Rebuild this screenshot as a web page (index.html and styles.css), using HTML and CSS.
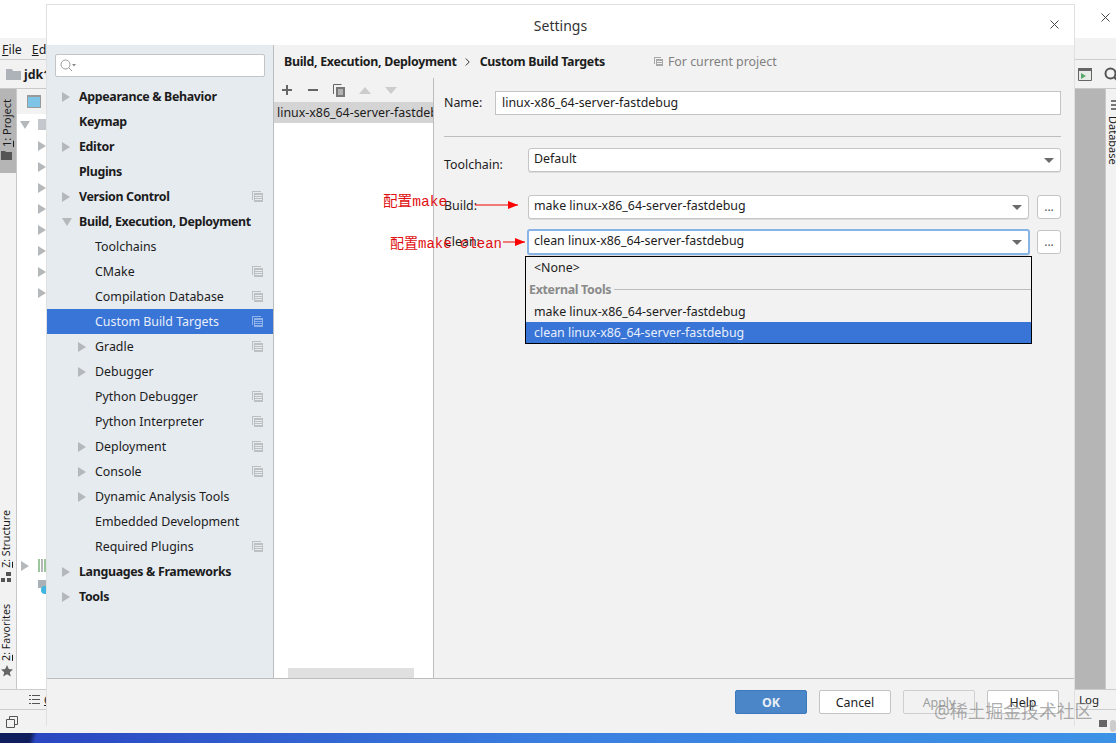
FILE: index.html
```html
<!DOCTYPE html>
<html lang="en">
<head>
    <meta charset="UTF-8">
    <title>Settings</title>
    <link rel="stylesheet" href="styles.css">
</head>
<body>
    <div class="desktop">
        <!-- IDE behind the dialog -->
        <div class="ide">
            <div class="ide-title">
                <svg class="ide-close" width="9" height="9" viewBox="0 0 9 9"><path d="M.5.5l8 8M8.500.5l-8 8" stroke="#444"/></svg>
            </div>
            <div class="ide-menu"><span><u>F</u>ile</span><span><u>E</u>d</span></div>
            <div class="ide-nav">
                <div class="crumb">
                    <svg width="15" height="11" viewBox="0 0 15 11"><path d="M0 0h6l1 2h8v9H0z" fill="#adb3b8"/></svg>
                    <b>jdk1</b>
                </div>
                <div class="nav-tools">
                    <svg width="14" height="13" viewBox="0 0 14 13"><rect width="14" height="13" fill="#e8ece8" /><rect width="14" height="3" fill="#666"/><path d="M3 5l5 3-5 3z" fill="#59a869"/><path d="M.5.5h13v12H.5z" fill="none" stroke="#666"/></svg>
                    <svg width="15" height="15" viewBox="0 0 15 15"><circle cx="6.500" cy="6.500" r="5" fill="none" stroke="#555" stroke-width="2"/><path d="M10 10l5 5" stroke="#555" stroke-width="2"/></svg>
                </div>
            </div>
            <div class="ide-main">
                <div class="side-strip">
                    <div class="strip-tab on">
                        <span class="vtext"><u>1</u>: Project</span>
                        <svg width="11" height="9" viewBox="0 0 11 9"><path d="M0 0h4l1 1h6v8H0z" fill="#555"/></svg>
                    </div>
                    <div class="strip-low">
                        <div class="strip-tab">
                            <span class="vtext"><u>Z</u>: Structure</span>
                            <svg width="10" height="10" viewBox="0 0 10 10"><path d="M5 0h5v4H5zM0 6h4v4H0zM6 6h4v4H6z" fill="#555"/></svg>
                        </div>
                        <div class="strip-tab">
                            <span class="vtext"><u>2</u>: Favorites</span>
                            <svg width="12" height="12" viewBox="0 0 12 12"><path d="M6 0l1.800 4 4.200.4-3.200 2.800 1 4.300L6 9.200l-3.800 2.300 1-4.300L0 4.400l4.200-.4z" fill="#666"/></svg>
                        </div>
                    </div>
                </div>
                <div class="tree">
                    <div class="tree-tools"><svg width="14" height="13" viewBox="0 0 14 13"><rect width="14" height="13" fill="#7ec4e6" /><path d="M.5.5h13v12H.5z" fill="none" stroke="#999"/><rect width="14" height="2" fill="#999"/></svg></div>
                    <div class="tree-row root"><i class="arrow down"></i><svg width="9" height="11" viewBox="0 0 9 11"><path d="M0 0h9v11H0z" fill="#c4c8cc"/></svg></div>
                    <div class="tree-row"><i class="arrow"></i></div>
                    <div class="tree-row"><i class="arrow"></i></div>
                    <div class="tree-row"><i class="arrow"></i></div>
                    <div class="tree-row"><i class="arrow"></i></div>
                    <div class="tree-row"><i class="arrow"></i></div>
                    <div class="tree-row"><i class="arrow"></i></div>
                    <div class="tree-row"><i class="arrow"></i></div>
                    <div class="tree-row"><i class="arrow"></i></div>
                    <div class="tree-row low"><i class="arrow"></i><svg width="8" height="13" viewBox="0 0 8 13"><path d="M0 0h2v13H0z" fill="#9cc79c"/><path d="M3 0h2v13H3z" fill="#b6b6b6"/><path d="M6 0h2v13H6z" fill="#9cc79c"/></svg></div>
                    <div class="tree-row last"><svg width="8" height="14" viewBox="0 0 8 14"><path d="M0 0h8v8H0z" fill="#a9b0b6"/><circle cx="7" cy="10" r="4" fill="#40b6e0"/></svg></div>
                </div>
                <div class="ide-spacer"></div>
                <div class="ide-gutter"></div>
                <div class="side-strip right">
                    <svg width="8" height="12" viewBox="0 0 8 12"><path d="M0 1h8v2H0zM0 5h8v2H0zM0 9h8v2H0z" fill="#777"/></svg>
                    <span class="vtext flip">Database</span>
                </div>
            </div>
            <div class="ide-tools">
                <div class="tool-left">
                    <svg width="11" height="9" viewBox="0 0 11 9"><path d="M0 0h2v1H0zM3 0h8v1H3zM0 4h2v1H0zM3 4h8v1H3zM0 8h2v1H0zM3 8h8v1H3z" fill="#555"/></svg>
                    <u>6</u>
                </div>
                <span class="tool-log">Log</span>
            </div>
            <div class="ide-status">
                <svg width="12" height="12" viewBox="0 0 12 12"><path d="M.5 3.500h8v8h-8zM3.500 3.500v-3h8v8h-3" fill="none" stroke="#555"/></svg>
                <div class="status-right"><i class="status-square"></i><i class="status-blob"></i></div>
            </div>
            <div class="taskbar"></div>
        </div>

        <!-- Settings dialog -->
        <div class="dialog">
            <div class="dialog-title">Settings
                <svg class="dialog-close" width="9" height="9" viewBox="0 0 9 9"><path d="M.5.5l8 8M8.500.5l-8 8" stroke="#444"/></svg>
            </div>
            <div class="dialog-body">
                <div class="sidebar">
                    <div class="search">
                        <svg width="16" height="13" viewBox="0 0 16 13"><circle cx="5.500" cy="5.500" r="4.500" fill="none" stroke="#9a9a9a"/><path d="M9 9l3 3" stroke="#9a9a9a"/><path d="M12 5h4l-2 2.500z" fill="#888"/></svg>
                    </div>
                    <ul class="nav">
                        <li class="top"><i class="arrow"></i>Appearance &amp; Behavior</li>
                        <li class="top"><i class="arrow none"></i>Keymap</li>
                        <li class="top"><i class="arrow"></i>Editor</li>
                        <li class="top"><i class="arrow none"></i>Plugins</li>
                        <li class="top copy"><i class="arrow"></i>Version Control</li>
                        <li class="top"><i class="arrow down"></i>Build, Execution, Deployment</li>
                        <li class="sub"><i class="arrow none"></i>Toolchains</li>
                        <li class="sub copy"><i class="arrow none"></i>CMake</li>
                        <li class="sub copy"><i class="arrow none"></i>Compilation Database</li>
                        <li class="sub copy on"><i class="arrow none"></i>Custom Build Targets</li>
                        <li class="sub copy"><i class="arrow"></i>Gradle</li>
                        <li class="sub"><i class="arrow"></i>Debugger</li>
                        <li class="sub copy"><i class="arrow none"></i>Python Debugger</li>
                        <li class="sub copy"><i class="arrow none"></i>Python Interpreter</li>
                        <li class="sub copy"><i class="arrow"></i>Deployment</li>
                        <li class="sub copy"><i class="arrow"></i>Console</li>
                        <li class="sub"><i class="arrow"></i>Dynamic Analysis Tools</li>
                        <li class="sub"><i class="arrow none"></i>Embedded Development</li>
                        <li class="sub copy"><i class="arrow none"></i>Required Plugins</li>
                        <li class="top"><i class="arrow"></i>Languages &amp; Frameworks</li>
                        <li class="top"><i class="arrow"></i>Tools</li>
                    </ul>
                </div>
                <div class="content">
                    <div class="breadcrumb">
                        <b>Build, Execution, Deployment</b>
                        <svg class="sep" width="5" height="8" viewBox="0 0 5 8"><path d="M.8.5L4.200 4 .8 7.500" fill="none" stroke="#333"/></svg>
                        <b>Custom Build Targets</b>
                        <span class="scope"><i class="copy-icon"></i>For current project</span>
                    </div>
                    <div class="panes">
                        <div class="targets">
                            <div class="target-tools">
                                <svg width="12" height="12" viewBox="0 0 12 12"><path d="M6 1v10M1 6h10" stroke="#666" stroke-width="2"/></svg>
                                <svg width="12" height="12" viewBox="0 0 12 12"><path d="M1 6h10" stroke="#666" stroke-width="2"/></svg>
                                <svg width="12" height="13" viewBox="0 0 12 13"><path d="M.500 10V.500h8" fill="none" stroke="#666"/><path d="M3 3h9v10H3z" fill="#777"/><path d="M5 6h5M5 8h5M5 10h5" stroke="#eee"/></svg>
                                <svg width="12" height="7" viewBox="0 0 12 7"><path d="M6 0l6 7H0z" fill="#ccc"/></svg>
                                <svg width="12" height="7" viewBox="0 0 12 7"><path d="M6 7l6-7H0z" fill="#ccc"/></svg>
                            </div>
                            <div class="target-list">
                                <div class="target-row">linux-x86_64-server-fastdebug</div>
                                <div class="target-scroll"></div>
                            </div>
                        </div>
                        <div class="form">
                            <div class="row name-row">
                                <label>Name:</label>
                                <div class="field name-field">linux-x86_64-server-fastdebug</div>
                            </div>
                            <hr class="rule">
                            <div class="row toolchain-row">
                                <label class="wide">Toolchain:</label>
                                <div class="field combo">Default<i class="caret"></i></div>
                            </div>
                            <div class="row build-row">
                                <label class="wide">Build:</label>
                                <div class="field combo">make linux-x86_64-server-fastdebug<i class="caret"></i></div>
                                <button class="dots">...</button>
                            </div>
                            <div class="row clean-row">
                                <label class="wide">Clean:</label>
                                <div class="field combo focus">clean linux-x86_64-server-fastdebug<i class="caret"></i></div>
                                <button class="dots">...</button>
                            </div>
                            <div class="popup">
                                <div class="pop-item">&lt;None&gt;</div>
                                <div class="pop-group"><span>External Tools</span></div>
                                <div class="pop-item">make linux-x86_64-server-fastdebug</div>
                                <div class="pop-item on">clean linux-x86_64-server-fastdebug</div>
                            </div>
                        </div>
                    </div>
                </div>
            </div>
            <div class="dialog-foot">
                <button class="btn primary">OK</button>
                <button class="btn">Cancel</button>
                <button class="btn off">Apply</button>
                <button class="btn">Help</button>
            </div>
        </div>

        <!-- red notes drawn over the screenshot -->
        <span class="note note-build">配置make</span>
        <span class="note note-clean">配置make clean</span>
        <svg class="note-arrows" width="60" height="60" viewBox="0 0 60 60">
            <path d="M5 13h43" stroke="#e00" />
            <path d="M38 9l10 4-10 4z" fill="#f00"/>
            <path d="M33 50h22" stroke="#e00" />
            <path d="M45 46l10 4-10 4z" fill="#f00"/>
        </svg>
        <span class="watermark">@稀土掘金技术社区</span>
    </div>
</body>
</html>
```

FILE: styles.css
```css
*{
    margin: 0;
    padding: 0;
    box-sizing: border-box;
    list-style-type: none;
}
body{
    font-family: "Noto Sans", "Noto Sans CJK SC", sans-serif;
    font-size: 12.4px;
    color: #1c1c1c;
    overflow: hidden;
}
.desktop{
    position: relative;
    width: 1116px;
    height: 743px;
    overflow: hidden;
}

/* ide */
.ide{
    display: flex;
    flex-direction: column;
    height: 743px;
    background: #f2f2f2;
}
.ide-title{
    display: flex;
    justify-content: flex-end;
    height: 38px;
    padding: 13px 6px 0 0;
    background: #fff;
}
.ide-menu{
    display: flex;
    gap: 10px;
    height: 22px;
    padding: 3px 0 0 2px;
    border-bottom: 1px solid #ccc;
    background: #f2f2f2;
}
.ide-nav{
    display: flex;
    justify-content: space-between;
    align-items: center;
    height: 29px;
    padding: 0 0 0 6px;
    border-bottom: 1px solid #c9c9c9;
}
.crumb{
    display: flex;
    align-items: center;
    gap: 3px;
}
.nav-tools{
    display: flex;
    align-items: center;
    gap: 12px;
    margin-right: -3px;
}
.ide-main{
    display: flex;
    flex: 1;
    min-height: 0;
}
.side-strip{
    display: flex;
    flex-direction: column;
    justify-content: space-between;
    flex: none;
    width: 17px;
    border-right: 1px solid #c9c9c9;
    background: #f2f2f2;
}
.side-strip.right{
    justify-content: flex-start;
    align-items: flex-start;
    gap: 5px;
    width: 11px;
    padding: 10px 0 0 5px;
    border-right: 0;
    border-left: 1px solid #c9c9c9;
    font-size: 11px;
}
.side-strip.right .vtext{
    margin-left: -3px;
}
.strip-tab{
    display: flex;
    flex-direction: column;
    align-items: flex-start;
    gap: 4px;
    padding-left: 1px;
    font-size: 10.6px;
}
.strip-tab.on{
    height: 84px;
    padding-top: 10px;
    background: #b5b5b5;
    font-size: 11px;
}
.strip-low{
    display: flex;
    flex-direction: column;
    gap: 22px;
    padding-bottom: 12px;
}
.vtext{
    writing-mode: vertical-rl;
    transform: rotate(180deg);
    line-height: 11px;
    white-space: nowrap;
}
.vtext.flip{
    transform: none;
}
.tree{
    display: flex;
    flex-direction: column;
    flex: none;
    width: 30px;
    background: #fff;
}
.tree-tools{
    height: 25px;
    padding: 6px 0 0 10px;
    background: #f2f2f2;
}
.tree-row{
    display: flex;
    align-items: center;
    gap: 0;
    flex: none;
    height: 21px;
    padding-left: 21px;
}
.tree-row .arrow{
    margin-right: 3px;
}
.tree-row.root{
    padding-left: 3px;
}
.tree-row.root .arrow{
    margin-right: 8px;
}
.tree-row.low{
    margin-top: 252px;
    padding-left: 4px;
}
.tree-row.low .arrow{
    margin-right: 9px;
}
.tree-row.last{
    padding-left: 21px;
}
.ide-spacer{
    flex: 1;
    background: #fff;
}
.ide-gutter{
    flex: none;
    width: 30px;
    background: #b5b5b5;
}
.ide-tools{
    display: flex;
    justify-content: space-between;
    height: 21px;
    padding: 2px 0 0 29px;
    border-top: 1px solid #ccc;
    border-bottom: 1px solid #ccc;
    font-size: 11.5px;
}
.tool-left{
    display: flex;
    align-items: center;
    gap: 4px;
    height: 14px;
}
.tool-log{
    width: 37px;
}
.ide-status{
    display: flex;
    justify-content: space-between;
    height: 23px;
    padding: 6px 0 0 6px;
}
.status-right{
    display: flex;
    gap: 3px;
    padding-top: 4px;
}
.status-square{
    width: 8px;
    height: 7px;
    background: #666;
}
.status-blob{
    width: 6px;
    height: 12px;
    border-radius: 3px;
    background: #ccc;
}
.taskbar{
    height: 10px;
    background: linear-gradient(105deg, #0e1d5c 0, #0e1d5c 30px, #2a46c0 36px, #3a7fe0 50%, #3c92e6 100%);
}

/* dialog */
.dialog{
    position: absolute;
    left: 46px;
    top: 4px;
    display: flex;
    flex-direction: column;
    width: 1029px;
    height: 722px;
    border: 1px solid #e0e0e0;
    border-bottom: 0;
    background: #f2f2f2;
}
.dialog-title{
    position: relative;
    height: 40px;
    background: #fff;
    text-align: center;
    font-size: 14px;
    line-height: 41px;
    color: #333;
}
.dialog-close{
    position: absolute;
    right: 15px;
    top: 15px;
}
.dialog-body{
    display: flex;
    height: 634px;
    border-bottom: 1px solid #bdbdbd;
}
.sidebar{
    width: 227px;
    padding-top: 9px;
    border-right: 1px solid #bdbdbd;
    background: #e6ebf0;
}
.search{
    height: 23px;
    margin: 0 8px;
    padding: 4px 0 0 4px;
    border: 1px solid #c4c4c4;
    border-radius: 2px;
    background: #fff;
}
.nav{
    margin-top: 7px;
}
.nav li{
    position: relative;
    display: flex;
    align-items: center;
    height: 25px;
    line-height: 25px;
    white-space: nowrap;
}
.nav .top{
    padding-left: 15px;
    font-weight: 700;
    letter-spacing: -0.33px;
}
.nav .sub{
    padding-left: 31px;
}
.nav .on{
    background: #3875d7;
    color: #e8effa;
}
.nav .copy:after,
.copy-icon{
    content: '';
    width: 7px;
    height: 7px;
    border: 1px solid #bcc0c3;
    background: repeating-linear-gradient(#bcc0c3 0 1px, transparent 1px 2px);
    box-shadow: -1px -1px 0 #e6ebf0, -2px -2px 0 #bcc0c3;
}
.nav .copy:after{
    position: absolute;
    right: 10px;
    top: 9px;
}
.nav .on.copy:after{
    border-color: #8fb2e8;
    background: repeating-linear-gradient(#8fb2e8 0 1px, transparent 1px 2px);
    box-shadow: -1px -1px 0 #3875d7, -2px -2px 0 #8fb2e8;
}
.arrow{
    flex: none;
    display: block;
    width: 0;
    height: 0;
    margin-right: 9px;
    border-left: 8px solid #b5b8ba;
    border-top: 5px solid transparent;
    border-bottom: 5px solid transparent;
}
.arrow.none{
    border-color: transparent;
}
.arrow.down{
    margin-left: 0;
    border-left: 5px solid transparent;
    border-right: 5px solid transparent;
    border-top: 8px solid #b5b8ba;
    border-bottom: 0;
    margin-right: 7px;
}
.content{
    flex: 1;
    display: flex;
    flex-direction: column;
}
.breadcrumb{
    display: flex;
    align-items: center;
    height: 33px;
    padding: 0 0 0 10px;
}
.breadcrumb b{
    letter-spacing: -0.3px;
}
.sep{
    margin: 0 10px 0 8px;
}
.scope{
    display: flex;
    align-items: center;
    gap: 5px;
    margin-left: 51px;
    color: #808080;
}
.copy-icon{
    display: block;
    flex: none;
    margin-top: 2px;
    background: repeating-linear-gradient(#a8a8a8 0 1px, transparent 1px 2px);
    border-color: #a8a8a8;
    box-shadow: -1px -1px 0 #f2f2f2, -2px -2px 0 #a8a8a8;
}
.panes{
    flex: 1;
    display: flex;
    min-height: 0;
}
.targets{
    display: flex;
    flex-direction: column;
    width: 160px;
    border-right: 1px solid #bdbdbd;
}
.target-tools{
    display: flex;
    align-items: center;
    gap: 14px;
    height: 24px;
    padding: 0 0 0 7px;
}
.target-list{
    position: relative;
    flex: 1;
    background: #fff;
}
.target-row{
    overflow: hidden;
    height: 21px;
    padding-left: 3px;
    background: #d4d4d4;
    line-height: 21px;
    white-space: nowrap;
}
.target-scroll{
    position: absolute;
    left: 14px;
    bottom: 0;
    width: 126px;
    height: 10px;
    background: #e0e0e0;
}
.form{
    position: relative;
    flex: 1;
    padding: 13px 13px 0 10px;
}
.row{
    display: flex;
    align-items: center;
    height: 24px;
}
.row label{
    width: 51px;
    flex: none;
}
.row label.wide{
    width: 84px;
}
.name-row label{
    margin-bottom: 2px;
}
.toolchain-row label.wide{
    margin-top: 8px;
}
.build-row label.wide{
    margin-bottom: 3px;
}
.clean-row label.wide{
    margin-bottom: 2px;
}
.field{
    position: relative;
    flex: 1;
    height: 24px;
    padding-left: 5px;
    border: 1px solid #c4c4c4;
    border-radius: 3px;
    background: #fff;
    line-height: 20px;
}
.name-field{
    padding-left: 6px;
    border-radius: 0;
    line-height: 22px;
}
.rule{
    height: 1px;
    margin: 21px 0 0;
    border: 0;
    background: #bdbdbd;
}
.toolchain-row{
    margin-top: 11px;
}
.build-row{
    margin-top: 23px;
}
.clean-row{
    margin-top: 11px;
}
.combo{
    box-shadow: 0 1px 0 #ddd;
}
.focus{
    margin: -1px;
    height: 26px;
    border: 2px solid #87b3e6;
    border-radius: 3px;
    padding-left: 5px;
}
.caret{
    position: absolute;
    right: 6px;
    top: 9px;
    border-left: 5px solid transparent;
    border-right: 5px solid transparent;
    border-top: 5px solid #6b6b6b;
}
.dots{
    flex: none;
    width: 24px;
    height: 24px;
    margin-left: 8px;
    border: 1px solid #c4c4c4;
    border-radius: 3px;
    background: #fff;
    font: 12px "Noto Sans", sans-serif;
    line-height: 18px;
    color: #555;
}
.popup{
    position: absolute;
    left: 91px;
    top: 178px;
    width: 507px;
    height: 88px;
    border: 1px solid #000;
    background: #f2f2f2;
}
.pop-item{
    height: 21px;
    padding-left: 8px;
    line-height: 21px;
}
.pop-item.on{
    background: #3875d7;
    color: #e8effa;
}
.pop-group{
    display: flex;
    align-items: center;
    gap: 3px;
    height: 23px;
    padding-left: 3px;
    font-weight: 700;
    letter-spacing: -0.3px;
    color: #8a8a8a;
}
.pop-group:after{
    content: '';
    flex: 1;
    height: 1px;
    background: #bdbdbd;
}
.dialog-foot{
    display: flex;
    justify-content: flex-end;
    align-items: center;
    gap: 12px;
    flex: 1;
    padding: 0 15px 1px 0;
}
.btn{
    width: 72px;
    height: 24px;
    border: 1px solid #c4c4c4;
    border-radius: 2px;
    background: #fff;
    font: 12.4px "Noto Sans", sans-serif;
    color: #1c1c1c;
}
.btn.primary{
    border-color: #3d78bd;
    background: #4a86c8;
    color: #e8eef6;
    font-weight: 700;
}
.btn.off{
    border-color: #cfcfcf;
    background: #f2f2f2;
    color: #a0a0a0;
}

/* notes over the screenshot */
.note{
    position: absolute;
    font-family: "Liberation Mono", "Noto Sans CJK SC", monospace;
    line-height: 18px;
    color: #e01010;
    white-space: nowrap;
}
.note-build{
    left: 383px;
    top: 193px;
    font-size: 14.6px;
}
.note-clean{
    left: 390px;
    top: 235px;
    font-size: 14px;
}
.note-arrows{
    position: absolute;
    left: 470px;
    top: 192px;
}
.watermark{
    position: absolute;
    left: 934px;
    top: 699px;
    font-size: 17.8px;
    line-height: 24px;
    color: rgba(120, 120, 120, .6);
    white-space: nowrap;
}
```
